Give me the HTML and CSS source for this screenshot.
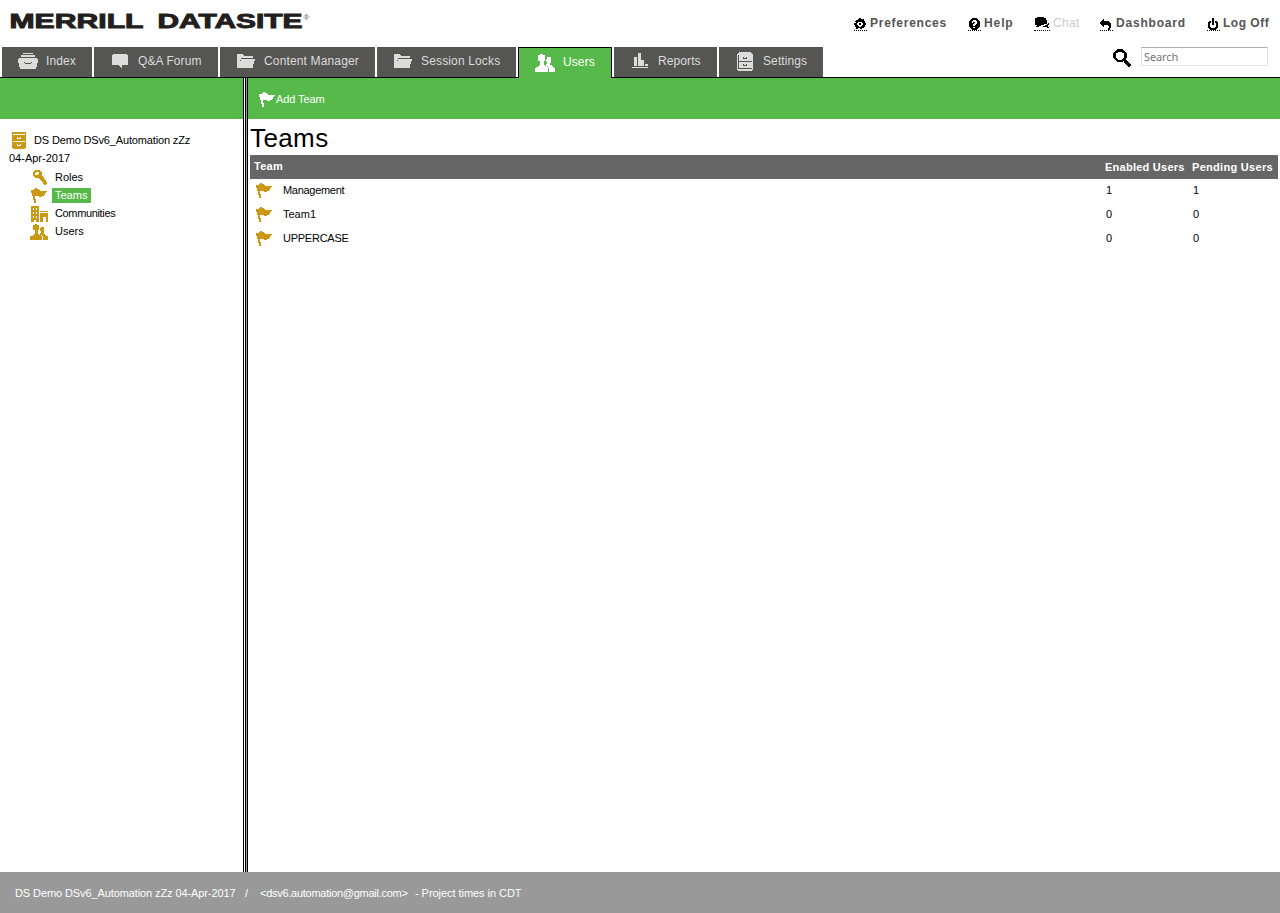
FILE: index.html
```html
<!DOCTYPE html>
<html lang="en">
<head>
<meta charset="utf-8">
<title>Merrill Datasite - Teams</title>
<link rel="stylesheet" href="styles.css">
</head>
<body>
<svg class="defs" aria-hidden="true">
  <symbol id="flag" viewBox="0 0 16 16"><path d="M0 2h3V1h1V0h2v1h2v1h1v1h7v1h-1v1h-1v2h-1v1h-2v1H8V8H4v3h1v4H3v-3H2V8H1V5H0z"/></symbol>
  <symbol id="people" viewBox="0 0 20 18"><path d="M3 1h2V0h3v1h2v6H9v4h1v1h2v1h1v5H0v-4h1v-1h2v-1h1v-1h1V7H3zM12 3h4v6h-1v2h2v1h1v1h1v1h1v4h-6v-4h-1v-2h-2v-2h1V8h-1V5h1z"/></symbol>
  <symbol id="folder" viewBox="0 0 18 14"><path d="M0 0h6v1h1v1h9v2H4v2H3v4H2v4H0zM5 5h13v2h-1v3h-1v4H2v-4h1V7h1V5z"/></symbol>
</svg>
<header class="header">
  <div class="topline">
    <svg class="logo" width="312" height="24" role="img" aria-label="Merrill Datasite">
      <text class="logo-text" x="9.5" y="20" textLength="134" lengthAdjust="spacingAndGlyphs">MERRILL</text>
      <text class="logo-text" x="157.5" y="20" textLength="145" lengthAdjust="spacingAndGlyphs">DATASITE</text>
      <text class="logo-mark" x="303.5" y="11.5">®</text>
    </svg>
    <nav class="links">
      <a class="link pref"><svg width="13" height="13" viewBox="0 -1 13 13"><path fill-rule="evenodd" d="M2 2h2V1h1V0h2v1h1V1h2v2h1v2h1v2h-1v2h-1v1H8v1H6v-1H4v1H2V9H1V7H0V5h2V4H1V3h1zM4 4v1H3v2h1v1h1v1h2V8h1V7h1V5H8V4zM5 5h2v2H5z"/></svg><span>Preferences</span></a>
      <a class="link help"><svg width="13" height="13" viewBox="0 -1 13 13"><path fill-rule="evenodd" d="M4 0h5v1h1v1h1v1h1v6h-1v1h-1v1H9v1H4v-1H3v-1H2V9H1V3h1V2h1V1h1zM5 2v1H4v2h1V4h2v1H6v1H5v2h2V7h1V6h1V3H8V2zM5 9v1h2V9z"/></svg><span>Help</span></a>
      <a class="link chat"><svg width="16" height="14" viewBox="0 0 16 14"><path d="M3 0h7v1h2v2h1v4h-1v1h-2v1H7v1H5v1H2v-1h1V9H1V7H0V3h1V1h2zM14 5h1v1h1v3h-1v2h1v1h-3v-1H9v-1h2V9h2V8h1z"/></svg><span>Chat</span></a>
      <a class="link dash"><svg width="13" height="13" viewBox="0 -1 13 13"><path d="M4 1v2h5v1h1v1h1v5h-1v2H8v-2h1V8H8V7H4v2H3V8H2V7H1V6H0V4h1V3h1V2h1V1z"/></svg><span>Dashboard</span></a>
      <a class="link off"><svg width="13" height="13" viewBox="0 -1 13 13"><path d="M5 0h2v7H5zM2 3h2v2H3v4h1v1h4V9h1V5H8V3h2v1h1v6h-1v1H9v1H3v-1H2v-1H1V4h1z"/></svg><span>Log Off</span></a>
    </nav>
  </div>
  <div class="navline">
    <nav class="tabs">
      <a class="tab t-index"><svg width="20" height="16" viewBox="0 0 20 16"><path fill-rule="evenodd" d="M5 0h10v1H5zM3 2h14v2H3zM1 5h18v1h1v4h-1v4h-1v2H2v-2H1v-4H0V6h1zM6 9v1h1v1h6v-1h1V9h-1v1H7V9z"/></svg><span>Index</span></a>
      <a class="tab t-qa"><svg width="16" height="14" viewBox="0 0 16 14"><path d="M1 0h14v1h1v10h-6v3H9v-1H8v-1H7v-1H0V1h1z"/></svg><span>Q&amp;A Forum</span></a>
      <a class="tab t-content"><svg width="18" height="14"><use href="#folder"/></svg><span>Content Manager</span></a>
      <a class="tab t-locks"><svg width="18" height="14"><use href="#folder"/></svg><span>Session Locks</span></a>
      <a class="tab t-users active"><svg width="20" height="18"><use href="#people"/></svg><span>Users</span></a>
      <a class="tab t-reports"><svg width="16" height="16" viewBox="0 0 16 16"><path d="M2 4h3v9H2zM6 0h3v7h3v6H6zM13 11h3v2h-3zM0 14h16v1H0z"/></svg><span>Reports</span></a>
      <a class="tab t-settings"><svg width="16" height="19" viewBox="0 0 16 19"><path fill-rule="evenodd" d="M2 0h12v1h1v1h1v16h-1v1H1v-1H0V2h1V1h1zM1 3v14h14v-1H2v-6h13V9H2V3zM6 5v2h4V5H9v1H7V5zM6 12v2h4v-2H9v1H7v-1z"/></svg><span>Settings</span></a>
    </nav>
    <div class="search">
      <svg width="19" height="19" viewBox="0 0 19 19"><path d="M5 1.500h4l3.500 3v4l-3.500 3.500H5l-3.500-3.500v-4z" fill="none" stroke="#000" stroke-width="2.500"/><path d="M11.500 11.500l6 5.500" stroke="#000" stroke-width="3.500"/></svg>
      <input type="text" placeholder="Search">
    </div>
  </div>
</header>
<main class="main">
  <aside class="side">
    <div class="bar"></div>
    <div class="tree">
      <div class="root"><svg width="14" height="17" viewBox="0 0 14 17"><path fill-rule="evenodd" d="M0 0h14v16h-1v1H1v-1H0zM1 2v1h12V2zM5 5v2h4V5H8v1H6V5zM1 9v1h12V9zM5 12v2h4v-2H8v1H6v-1z"/></svg><span>DS Demo DSv6_Automation zZz</span><br><span class="date">04-Apr-2017</span></div>
      <div class="node"><i class="ico"><svg width="16" height="15" viewBox="-2 0 16 15"><path fill-rule="evenodd" d="M2 0h5v1h1v1h1v4h1v1h1v2h1v1h1v2h1v2h-1v1h-2v-1h-1v-2H9v-1H8v-1H7V9H6V8H2V7H1V6H0V2h1V1h1zM3 2v1H2v2h3V4h1V2z"/></svg></i><span>Roles</span></div>
      <div class="node selected"><i class="ico"><svg width="16" height="16"><use href="#flag"/></svg></i><span>Teams</span></div>
      <div class="node"><i class="ico"><svg width="17" height="16" viewBox="0 0 17 16"><path fill-rule="evenodd" d="M0 0h8v16H5v-2H3v2H0zM2 2v2h1V2zM5 2v2h1V2zM2 6v2h1V6zM5 6v2h1V6zM2 10v2h1v-2zM5 10v2h1v-2zM9 5h8v1H9zM9 7h8v9h-2v-5h-3v5H9z"/></svg></i><span class="com">Communities</span></div>
      <div class="node"><i class="ico wide"><svg width="18" height="16" viewBox="0 0 20 18" preserveAspectRatio="none"><use href="#people" width="20" height="18"/></svg></i><span>Users</span></div>
    </div>
  </aside>
  <div class="splitter"></div>
  <section class="content">
    <div class="bar"><svg width="16" height="16"><use href="#flag"/></svg><span>Add Team</span></div>
    <h1>Teams</h1>
    <div class="table">
      <div class="row head"><span class="name">Team</span><span class="num">Enabled Users</span><span class="num">Pending Users</span></div>
      <div class="row"><svg width="16" height="16"><use href="#flag"/></svg><span class="name n1">Management</span><span class="num">1</span><span class="num">1</span></div>
      <div class="row"><svg width="16" height="16"><use href="#flag"/></svg><span class="name n2">Team1</span><span class="num">0</span><span class="num">0</span></div>
      <div class="row"><svg width="16" height="16"><use href="#flag"/></svg><span class="name n3">UPPERCASE</span><span class="num">0</span><span class="num">0</span></div>
    </div>
  </section>
</main>
<footer class="footer"><span class="project">DS Demo DSv6_Automation zZz 04-Apr-2017</span><span class="slash">/</span><span class="mail">&lt;dsv6.automation@gmail.com&gt;</span><span class="zone">- Project times in CDT</span></footer>
</body>
</html>
```
FILE: styles.css
```css
* { box-sizing: border-box; }
body {
  margin: 0;
  height: 913px;
  display: flex;
  flex-direction: column;
  overflow: hidden;
  background: #fff;
  color: #000;
  font: 11px/18px "Liberation Sans", Arial, sans-serif;
  white-space: nowrap;
}
svg { display: block; flex: none; shape-rendering: crispEdges; }
.defs { position: absolute; width: 0; height: 0; }

.header { height: 78px; border-bottom: 1px solid #000; display: flex; flex-direction: column; }
.topline { height: 47px; padding-top: 8px; display: flex; justify-content: space-between; }
.logo-text { font-size: 19.500px; font-weight: bold; fill: #231f20; stroke: #231f20; stroke-width: .9; }
.logo-mark { font-size: 8px; fill: #555; }
.links { display: flex; padding-top: 7px; font-size: 12px; line-height: 16px; font-weight: bold; color: #555; letter-spacing: .75px; }
.link { display: flex; align-items: flex-start; gap: 3px; }
.link svg { margin-top: 2px; border-bottom: 1px dotted #000; height: 14px; overflow: visible; }
.pref { width: 114px; }
.help { width: 66px; letter-spacing: .9px; }
.chat { width: 66px; font-weight: normal; color: #ccc; letter-spacing: .3px; }
.dash { width: 107px; letter-spacing: .8px; }
.off { width: 73px; letter-spacing: .5px; }

.navline { height: 30px; display: flex; justify-content: space-between; }
.tabs { display: flex; gap: 2px; padding-left: 2px; font-size: 12px; letter-spacing: .1px; }
.tab { height: 30px; display: flex; align-items: center; background: #555553; color: #dcdcdc; line-height: 28px; }
.tab svg { fill: #dcdcdc; margin-top: -2px; }
.tab span { align-self: flex-start; }
.t-index { width: 90px; padding-left: 16px; gap: 8px; }
.t-qa { width: 124px; padding-left: 18px; gap: 10px; }
.t-content { width: 155px; padding-left: 17px; gap: 9px; letter-spacing: .15px; }
.t-locks { width: 139px; padding-left: 17px; gap: 9px; letter-spacing: .15px; }
.t-users { width: 94px; padding-left: 16px; gap: 8px; }
.t-reports { width: 103px; padding-left: 18px; gap: 10px; }
.t-settings { width: 104px; padding-left: 18px; gap: 10px; }
.tab.active { height: 31px; background: #56b949; border: 1px solid #000; border-bottom: 0; color: #fff; }
.tab.active svg { fill: #fff; margin-top: -1px; }
.search { display: flex; gap: 9px; padding-right: 12px; }
.search svg { margin-top: 2px; }
.search input {
  width: 127px; height: 19px; margin: 0; padding: 0 0 0 2px;
  border: 1px solid #e2e3ea; border-top-color: #abadb3; border-radius: 1px;
  font: 11px "Noto Sans", sans-serif; letter-spacing: -.1px; outline: 0;
}
.search input::placeholder { color: #757575; opacity: 1; }

.main { flex: 1; display: flex; min-height: 0; }
.side { width: 243px; }
.bar { height: 41px; background: #56b949; }
.splitter { width: 5px; border: solid #000; border-width: 0 1px; background: linear-gradient(to right, #fff 1px, #000 1px 2px, #999 2px); }
.content { flex: 1; }
.content .bar { display: flex; align-items: center; padding-left: 11px; gap: 1px; color: #fff; letter-spacing: -.1px; }
.content .bar svg { fill: #fff; margin-top: 2px; }

.tree { padding: 12px 0 0 9px; }
.tree svg { fill: #cc9914; }
.root { height: 37px; letter-spacing: -.15px; }
.root svg { display: inline-block; vertical-align: -5px; margin: 0 8px 0 3px; }
.date { display: inline-block; letter-spacing: 0; }
.node { height: 18px; display: flex; align-items: center; padding-left: 21px; }
.ico { width: 22px; display: flex; padding: 1px 0 0 1px; }
.ico.wide { padding-left: 0; }
.node span { height: 15px; line-height: 15px; padding: 0 3px; }
.node .com { letter-spacing: -.35px; }
.selected span { background: #56b949; color: #fff; width: 39px; }

h1 { margin: 0; height: 36px; padding-left: 2px; font-size: 26px; line-height: 38px; font-weight: normal; letter-spacing: .4px; }
.table { margin: 0 2px; }
.row { height: 24px; display: flex; align-items: center; padding-left: 6px; }
.row span { line-height: 18px; padding-bottom: 2px; }
.row svg { fill: #cc9914; margin-right: 11px; }
.row .name { flex: 1; }
.row .n1 { letter-spacing: -.3px; }
.row .n3 { letter-spacing: -.25px; }
.num { width: 87px; }
.num:last-child { width: 85px; }
.head { background: #666; color: #fff; font-weight: bold; padding-left: 4px; letter-spacing: .25px; }
.row.head .num { padding-bottom: 0; }
.head .num:last-child { width: 86px; letter-spacing: .3px; }

.footer { height: 41px; background: #999; color: #fff; display: flex; line-height: 42px; padding-left: 15px; }
.project { width: 230px; letter-spacing: -.1px; }
.slash { width: 15px; }
.mail { width: 155px; letter-spacing: -.27px; }
.zone { letter-spacing: -.05px; }
```
